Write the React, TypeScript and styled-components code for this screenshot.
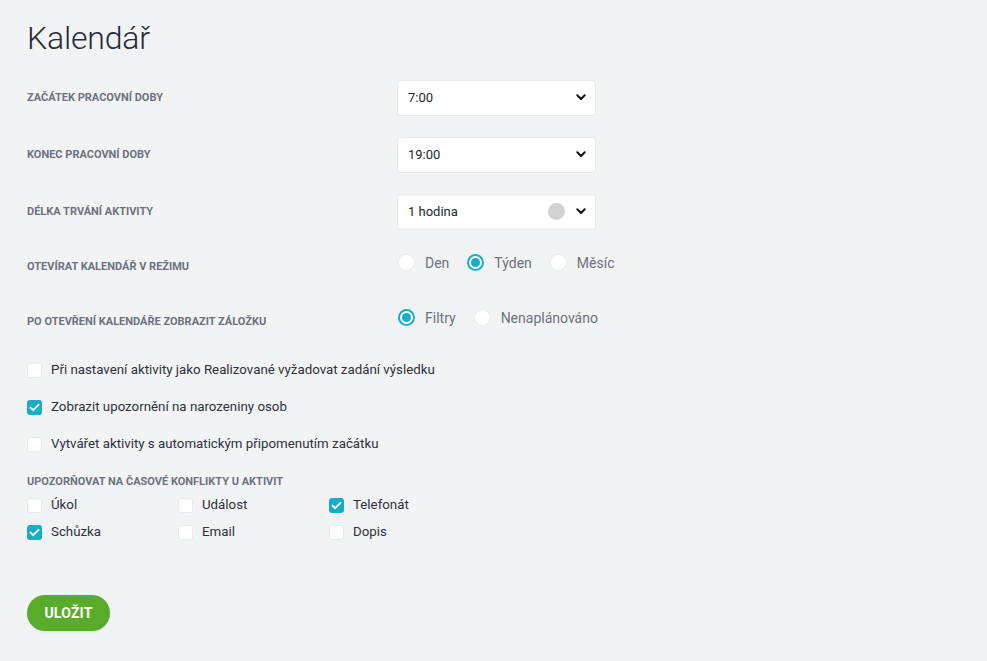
import React, { useState } from "react";
import styled, { createGlobalStyle } from "styled-components";

const Global = createGlobalStyle`
  html, body { margin: 0; padding: 0; background: #f2f3f5; }
  body { font-family: Roboto, "Noto Sans", Arial, sans-serif; color: #2b303a; }
  * { box-sizing: border-box; }
`;

const Page = styled.div`
  min-height: 661px;
  padding: 18px 27px 0 27px;
  background: #f2f3f5;
`;

const Title = styled.h1`
  margin: 0 0 11px 0;
  font-size: 32px;
  font-weight: 300;
  line-height: 40px;
  color: #262b35;
  letter-spacing: -0.2px;
`;

const FieldRow = styled.div<{ $h: number; $labelShift?: number }>`
  display: grid;
  grid-template-columns: 371px 197px;
  align-items: center;
  height: ${(p) => p.$h}px;
  & > label { transform: translateY(${(p) => p.$labelShift ?? 0}px); }
`;

const FieldLabel = styled.label`
  font-size: 11px;
  font-weight: 700;
  text-transform: uppercase;
  color: #6c7280;
  letter-spacing: 0;
`;

const SelectBox = styled.div`
  height: 34px;
  background: #fff;
  border-radius: 3px;
  box-shadow: 0 0 0 1px #e7e9ec;
  display: flex;
  align-items: center;
  padding: 0 9px 0 10px;
  font-size: 13px;
  color: #23272f;
`;

const SelectValue = styled.span`
  flex: 1;
`;

const Spinner = styled.span`
  width: 17px;
  height: 17px;
  border-radius: 50%;
  background: #d3d3d3;
  margin-right: 11px;
`;

const Chevron = () => (
  <svg width="10" height="7" viewBox="0 0 10 7">
    <path d="M1.3 1.3 L5 5 L8.7 1.3" fill="none" stroke="#111" strokeWidth="2" strokeLinecap="round" strokeLinejoin="round" />
  </svg>
);

const RadioGroup = styled.div`
  display: flex;
  align-items: center;
  gap: 18px;
  white-space: nowrap;
`;

const RadioItem = styled.span`
  display: inline-flex;
  align-items: center;
  gap: 10px;
  font-size: 14px;
  color: #6c727e;
`;

const RadioCircle = styled.span<{ $on?: boolean }>`
  width: 17px;
  height: 17px;
  border-radius: 50%;
  background: #fff;
  box-shadow: inset 0 0 0 ${(p) => (p.$on ? "2px #17acc8" : "1px #e8eaed")};
  display: inline-flex;
  align-items: center;
  justify-content: center;
  &::after {
    content: "";
    display: ${(p) => (p.$on ? "block" : "none")};
    width: 9px;
    height: 9px;
    border-radius: 50%;
    background: #17acc8;
  }
`;

const CheckList = styled.div`
  display: flex;
  flex-direction: column;
  gap: 19px;
  margin-top: 11px;
`;

const CheckItem = styled.span`
  display: inline-flex;
  align-items: center;
  gap: 9px;
  font-size: 13.3px;
  color: #2d323b;
  line-height: 18px;
`;

const Box = styled.span<{ $on?: boolean }>`
  width: 15px;
  height: 15px;
  border-radius: 3px;
  flex: none;
  background: ${(p) => (p.$on ? "#17acc8" : "#fff")};
  box-shadow: ${(p) => (p.$on ? "none" : "inset 0 0 0 1px #e8eaed")};
  display: inline-flex;
  align-items: center;
  justify-content: center;
`;

const Check = ({ on }: { on?: boolean }) => (
  <Box $on={on}>
    {on && (
      <svg width="11" height="9" viewBox="0 0 11 9">
        <path d="M1.5 4.6 L4.2 7.2 L9.5 1.8" fill="none" stroke="#fff" strokeWidth="1.9" strokeLinecap="round" strokeLinejoin="round" />
      </svg>
    )}
  </Box>
);

const SectionLabel = styled(FieldLabel)`
  display: block;
  margin-top: 22px;
`;

const ConflictGrid = styled.div`
  display: grid;
  grid-template-columns: repeat(3, 151px);
  row-gap: 9px;
  margin-top: 8px;
`;

const SaveButton = styled.button`
  margin-top: 54px;
  width: 83px;
  height: 36px;
  border: none;
  border-radius: 18px;
  background: #59ab2a;
  color: #fff;
  font-family: Roboto, Arial, sans-serif;
  font-size: 14px;
  font-weight: 700;
  letter-spacing: 0.2px;
  cursor: pointer;
  box-shadow: 0 1px 2px rgba(0,0,0,0.08);
`;

export default function App() {
  const [, setX] = useState(0);
  return (
    <>
      <Global />
      <Page>
        <Title>Kalendář</Title>
        <FieldRow $h={57}>
          <FieldLabel>Začátek pracovní doby</FieldLabel>
          <SelectBox><SelectValue>7:00</SelectValue><Chevron /></SelectBox>
        </FieldRow>
        <FieldRow $h={57}>
          <FieldLabel>Konec pracovní doby</FieldLabel>
          <SelectBox><SelectValue>19:00</SelectValue><Chevron /></SelectBox>
        </FieldRow>
        <FieldRow $h={57}>
          <FieldLabel>Délka trvání aktivity</FieldLabel>
          <SelectBox><SelectValue>1 hodina</SelectValue><Spinner /><Chevron /></SelectBox>
        </FieldRow>
        <FieldRow $h={45} $labelShift={4}>
          <FieldLabel>Otevírat kalendář v režimu</FieldLabel>
          <RadioGroup>
            <RadioItem><RadioCircle />Den</RadioItem>
            <RadioItem><RadioCircle $on />Týden</RadioItem>
            <RadioItem><RadioCircle />Měsíc</RadioItem>
          </RadioGroup>
        </FieldRow>
        <FieldRow $h={65} $labelShift={4}>
          <FieldLabel>Po otevření kalendáře zobrazit záložku</FieldLabel>
          <RadioGroup>
            <RadioItem><RadioCircle $on />Filtry</RadioItem>
            <RadioItem><RadioCircle />Nenaplánováno</RadioItem>
          </RadioGroup>
        </FieldRow>
        <CheckList>
          <CheckItem><Check />Při nastavení aktivity jako Realizované vyžadovat zadání výsledku</CheckItem>
          <CheckItem><Check on />Zobrazit upozornění na narozeniny osob</CheckItem>
          <CheckItem><Check />Vytvářet aktivity s automatickým připomenutím začátku</CheckItem>
        </CheckList>
        <SectionLabel>Upozorňovat na časové konflikty u aktivit</SectionLabel>
        <ConflictGrid>
          <CheckItem><Check />Úkol</CheckItem>
          <CheckItem><Check />Událost</CheckItem>
          <CheckItem><Check on />Telefonát</CheckItem>
          <CheckItem><Check on />Schůzka</CheckItem>
          <CheckItem><Check />Email</CheckItem>
          <CheckItem><Check />Dopis</CheckItem>
        </ConflictGrid>
        <SaveButton onClick={() => setX((v) => v + 1)}>ULOŽIT</SaveButton>
      </Page>
    </>
  );
}
